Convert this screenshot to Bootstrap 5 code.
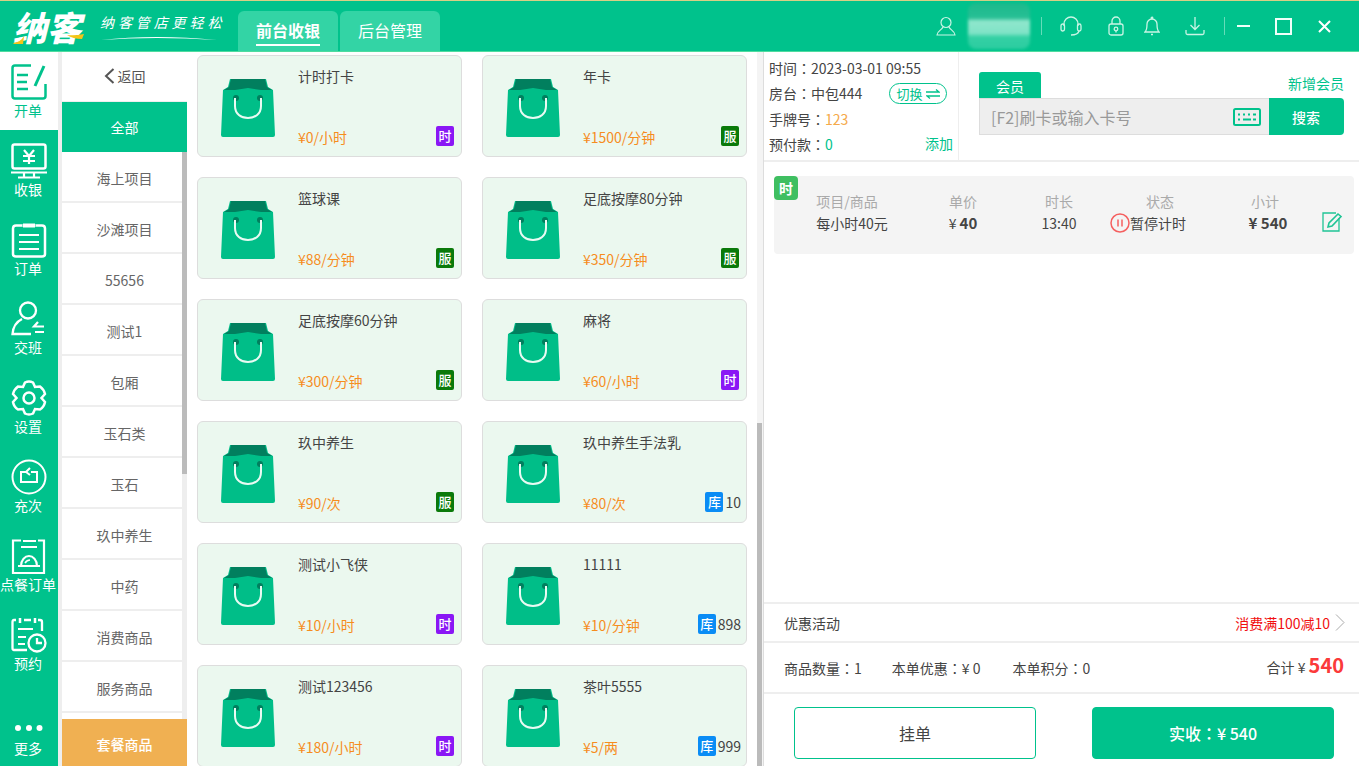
<!DOCTYPE html>
<html lang="zh">
<head>
<meta charset="utf-8">
<title>纳客</title>
<link rel="stylesheet" href="https://cdn.jsdelivr.net/npm/bootstrap@5.3.0/dist/css/bootstrap.min.css">
<style>
:root{--g:#00c28c;}
html,body{height:100%;overflow:hidden;}
body{font-family:"Noto Sans CJK SC","Noto Sans",sans-serif;font-size:14px;color:#444;background:#fff;line-height:20px;}
.shell{width:1359px;height:766px;}
svg{display:block;flex:none;}
.colon{font-family:"Noto Sans CJK TC",sans-serif;}
.topbar{height:52px;background:var(--g);border-top:1px solid #d8cf85;border-bottom:1px solid #4fdc9f;flex:none;}
.brand{width:71px;margin-left:13px;margin-top:1px;color:#fff;font-size:34px;line-height:40px;font-weight:900;font-style:italic;letter-spacing:0;white-space:nowrap;position:relative;}
.brand-swoosh{position:absolute;left:0;bottom:2px;}
.slogan{margin-left:16px;width:126px;color:#fff;}
.slogan-text{font-family:"Liberation Serif","Noto Sans CJK SC",serif;font-style:italic;font-size:14px;line-height:22px;letter-spacing:3.9px;white-space:nowrap;margin-top:2px;}
.tabs-top{margin-left:12px;gap:2px;align-self:flex-end;}
.tab-top{width:100px;height:40px;background:#33d4a5;border-radius:6px 6px 0 0;color:#fff;font-size:16px;text-align:center;line-height:38px;}
.tab-top span{display:inline-block;height:34px;line-height:38px;}
.tab-top.on span{font-weight:700;border-bottom:2px solid #fff;height:35px;line-height:38px;}
.tool{margin-left:auto;height:50px;}
.blurred{width:62px;height:46px;margin:0 11px 0 12px;background:linear-gradient(180deg,#1cb98c 0,#26bf94 32%,#8fe6cc 40%,#7fe3c6 66%,#34d0a4 74%,#2bcca0 100%);filter:blur(1.5px);border-radius:8px;}
.sep{width:1px;height:18px;background:#66dcb9;}
.nav-rail{width:58px;background:var(--g);flex:none;}
.rail-tile{height:79px;padding-top:13px;color:#fff;text-align:center;font-size:14px;}
.rail-tile svg{margin:0 auto;}
.rail-tile b{display:block;font-weight:400;line-height:20px;margin:0 -3px 0 -5px;white-space:nowrap;font-size:14px;}
.rail-tile.on{height:78px;padding-top:12px;background:#fff;color:var(--g);}
.rail-more{margin-top:auto;height:51px;padding-top:10px;}
.rail-more b{margin-top:7px;}
.rail-gap{width:4px;background:#eee;flex:none;}
.cats{width:125px;flex:none;color:#666;text-align:center;}
.cat-back{height:50px;line-height:50px;color:#555;border-bottom:1px solid #eee;gap:3px;padding-bottom:2px;}
.cat-all{height:50px;line-height:50px;background:var(--g);color:#fff;flex:none;}
.cat-body{flex:1 1 0;min-height:0;}
.cat-list{width:120px;}
.cat-row{height:51px;line-height:52px;border-bottom:2px solid #eee;padding-left:5px;white-space:nowrap;}
.cat-track{width:5px;background:#eee;}
.cat-thumb{height:322px;background:#bbb;}
.cat-foot{height:47px;line-height:50px;background:#f0b052;color:#fff;font-weight:500;flex:none;}
.goods{width:570px;flex:none;overflow:hidden;padding:3px 10px 0;}
.goods-grid{display:grid;grid-template-columns:265px 265px;column-gap:20px;row-gap:20px;}
.good{height:102px;background:#ebf8ef;border:1px solid #ddd;border-radius:6px;padding:23px 0 0 23px;gap:0;position:relative;}
.good-info{margin-left:23px;margin-top:-13px;height:88px;}
.good-name{color:#444;font-size:14px;line-height:20px;}
.good-price{color:#f68d1e;font-size:14px;line-height:20px;margin-top:auto;margin-bottom:7px;}
.tagbox{position:absolute;right:7px;bottom:10px;display:flex;align-items:center;gap:2px;font-size:14px;color:#444;}
.tagbox i{display:block;width:18px;height:20px;border-radius:2px;color:#fff;font-style:normal;font-size:13px;line-height:20px;text-align:center;font-weight:500;}
.tagbox.stock{right:5px;}
.t-time{background:#8a17f5;}
.t-serv{background:#0a7a0a;}
.t-stock{background:#0a8cf5;}
.goods-track{width:6px;background:#f4f4f4;flex:none;padding-top:371px;}
.goods-thumb{height:343px;background:#bbb;width:5px;}
.pane-line{width:1px;background:#ddd;flex:none;}
.pane{flex:1 1 0;min-width:0;}
.pane-top{height:110px;border-bottom:2px solid #eee;flex:none;}
.info{width:195px;border-right:1px solid #eee;padding:4px 11px 0 5px;line-height:25.3px;flex:none;}
.info .row-line{height:25.3px;}
.v-orange{color:#f5a94a;}
.v-green{color:var(--g);}
.switch-pill{width:58px;height:21px;border:1px solid var(--g);border-radius:11px;color:var(--g);font-size:13px;line-height:19px;gap:3px;margin-right:0;}
.info-add{margin:-1px -6px 0 0;font-size:14px;}
.member{padding:20px 15px 0 20px;flex:1 1 0;}
.m-tab{width:62px;height:26px;background:var(--g);color:#fff;text-align:center;line-height:28px;border-radius:3px 3px 0 0;}
.m-new{color:var(--g);font-size:14px;margin-top:-4px;}
.m-search{height:37px;}
.m-search .form-control{height:37px;background:#eee;border:1px solid #ddd;border-right:0;border-radius:0;color:#999;font-size:16px;padding:0 44px 0 11px;font-family:inherit;}
.m-search .form-control::placeholder{color:#999;}
.m-key{position:absolute;right:83px;top:10px;z-index:5;}
.m-go{width:76px;background:var(--g);color:#fff;border:0;border-radius:0 4px 4px 0;font-size:14px;font-weight:500;padding:0;}
.list-pane{flex:1 1 0;padding:14px 5px 0 10px;}
.order{height:78px;background:#f4f4f4;border-radius:4px;position:relative;}
.order-tag{position:absolute;left:0;top:0;width:24px;height:24px;background:#3fbf61;color:#fff;border-radius:4px;text-align:center;line-height:24px;font-weight:700;font-size:14px;}
.cell{position:absolute;top:15px;text-align:center;transform:translateX(-50%);white-space:nowrap;}
.cell small{display:block;color:#aaa;font-size:14px;line-height:20px;margin-bottom:2px;}
.cell span{display:flex;justify-content:center;align-items:center;line-height:20px;color:#444;}
.cell strong{font-weight:700;font-size:15px;}
.cell-name span{margin-left:10px;}
.cell-state span{margin-left:-24px;}
.cell-total span{margin-left:6px;}
.promo{height:41px;border-top:2px solid #eee;border-bottom:2px solid #eee;padding:0 14px 0 20px;flex:none;font-size:14px;}
.promo-red{color:#f10f0f;gap:5px;}
.sum{height:51px;border-bottom:2px solid #eee;padding:0 15px 0 20px;flex:none;gap:30px;font-size:14px;}
.sum-gain{margin-left:2px;}
.sum-total{margin-left:auto;margin-top:-3px;}
.sum-total b{color:#fb3a3a;font-size:20px;font-weight:700;}
.acts{height:72px;padding:13px 25px 0 30px;flex:none;}
.btn-hold,.btn-pay{width:242px;height:52px;border-radius:4px;font-size:16px;font-family:inherit;}
.btn-hold{background:#fff;border:1px solid var(--g);color:#444;}
.btn-pay{background:var(--g);border:1px solid var(--g);color:#fff;font-weight:500;}
</style>
</head>
<body>
<svg width="0" height="0" class="position-absolute">
  <symbol id="bag" viewBox="0 0 54 58">
    <path d="M9 0H45L47 8 52 11 54 56Q54 58 52 58H2Q0 58 0 56L2 11 7 8Z" fill="#00be88"/>
    <path d="M10 0H44L46 8 51 11 40 11 27 9 14 11H3L8 8Z" fill="#017f5e"/>
    <circle cx="15" cy="19" r="3" fill="#017f5e"/><circle cx="39" cy="19" r="3" fill="#017f5e"/>
    <path d="M14 19V27C14 35 20 39 27 39S40 35 40 27V19" fill="none" stroke="#e9fbf3" stroke-width="2"/>
  </symbol>
</svg>
<div class="shell d-flex flex-column">
  <header class="topbar d-flex align-items-center">
    <div class="brand">纳客<svg class="brand-swoosh" width="72" height="12" viewBox="0 0 72 12"><path d="M0 10Q8 9 11 3L10 11H1Z" fill="#f5c518"/><path d="M54 2Q62 3 71 1L69 6Q60 6 54 2Z" fill="#f5c518"/></svg></div>
    <div class="slogan">
      <div class="slogan-text">纳客管店更轻松</div>
      <svg width="118" height="6" viewBox="0 0 118 6"><path d="M1 5Q55-1 117 5Q55 1 1 5Z" fill="#fff"/></svg>
    </div>
    <div class="tabs-top d-flex">
      <div class="tab-top on"><span>前台收银</span></div>
      <div class="tab-top"><span>后台管理</span></div>
    </div>
    <div class="tool d-flex align-items-center">
      <svg width="20" height="20" viewBox="0 0 20 20" fill="none" stroke="#c9f5e5" stroke-width="1.2"><circle cx="10" cy="6.5" r="5"/><path d="M7 11C6 14 1 15 1 19H19C19 15 14 14 13 11"/></svg>
      <div class="blurred"></div>
      <div class="sep"></div>
      <svg style="margin-left:18px" width="22" height="20" viewBox="0 0 22 20" fill="none" stroke="#c9f5e5" stroke-width="1.3"><path d="M4 10V8A7 7 0 0 1 18 8V10"/><rect x="1" y="8" width="3.5" height="7" rx="1.7"/><rect x="17.5" y="8" width="3.5" height="7" rx="1.7"/><path d="M19 15Q18 19 11 19"/></svg>
      <svg style="margin-left:26px" width="16" height="20" viewBox="0 0 16 20" fill="none" stroke="#c9f5e5" stroke-width="1.3"><rect x="1" y="8" width="14" height="11" rx="2"/><path d="M4 8V5A4 4 0 0 1 12 5V8"/><circle cx="8" cy="13" r="1.8"/><path d="M8 15V16.5"/></svg>
      <svg style="margin-left:20px" width="16" height="20" viewBox="0 0 16 20" fill="none" stroke="#c9f5e5" stroke-width="1.3"><path d="M1 16C3 14 3 12 3 8A5 5 0 0 1 13 8C13 12 13 14 15 16Z"/><path d="M7 18.5H9"/><circle cx="8" cy="2" r=".8"/></svg>
      <svg style="margin-left:25px" width="20" height="20" viewBox="0 0 20 20" fill="none" stroke="#c9f5e5" stroke-width="1.3"><path d="M10 1V13M5.5 9L10 13.5 14.500 9"/><path d="M1 14V17Q1 18.500 2.500 18.500H17.500Q19 18.500 19 17V14"/></svg>
      <div class="sep" style="margin-left:19px"></div>
      <svg style="margin-left:12px" width="13" height="3" viewBox="0 0 13 3"><rect width="13" height="2" fill="#f0fff9"/></svg>
      <svg style="margin-left:25px" width="17" height="17" viewBox="0 0 17 17" fill="none" stroke="#f0fff9" stroke-width="2"><rect x="1" y="1" width="15" height="15"/></svg>
      <svg style="margin-left:25px;margin-right:27px" width="15" height="15" viewBox="0 0 15 15" fill="none" stroke="#fff" stroke-width="2"><path d="M2 2L13 13M13 2L2 13"/></svg>
    </div>
  </header>

  <div class="d-flex flex-grow-1" style="min-height:0">
    <nav class="nav-rail d-flex flex-column">
      <div class="rail-tile on">
        <svg width="36" height="36" viewBox="0 0 36 36" fill="none" stroke="#00c28c" stroke-width="2.500"><path d="M20 1.500H4Q1.500 1.500 1.500 4V32Q1.500 34.500 4 34.500H32Q34.500 34.500 34.500 32V20"/><path d="M6 11H17M6 18H16M6 25H17" stroke-width="2.500"/><path d="M33 2L24 22" stroke-width="3"/></svg>
        <b>开单</b>
      </div>
      <div class="rail-tile">
        <svg width="36" height="36" viewBox="0 0 36 36" fill="none" stroke="#fff" stroke-width="2.500"><rect x="1.500" y="1.500" width="33" height="24" rx="2"/><path d="M13 7L18 13 23 7M12 13H24M12 18H24M18 13V21" stroke-width="2.200"/><path d="M0 29.500H36M7 34.500H29M13 29.500V34.500M23 29.500V34.500" stroke-width="2.200"/></svg>
        <b>收银</b>
      </div>
      <div class="rail-tile">
        <svg width="36" height="36" viewBox="0 0 36 36" fill="none" stroke="#fff" stroke-width="2.500"><path d="M11 3.500H5Q2 3.500 2 6.500V32Q2 34.500 5 34.500H31Q34 34.500 34 32V6.500Q34 3.500 31 3.500H25"/><path d="M12 2H24V5H12Z" fill="#fff" stroke-width="1"/><path d="M8 13H28M8 20H28M8 27H28" stroke-width="2"/></svg>
        <b>订单</b>
      </div>
      <div class="rail-tile">
        <svg width="36" height="36" viewBox="0 0 36 36" fill="none" stroke="#fff" stroke-width="2.300"><circle cx="17" cy="9.500" r="8"/><path d="M11 18C5 21 2 26 1.500 33H20"/><path d="M27 21L23 25.500H33M33 31H24" stroke-width="2.200"/></svg>
        <b>交班</b>
      </div>
      <div class="rail-tile">
        <svg width="36" height="36" viewBox="0 0 36 36" fill="none" stroke="#fff" stroke-width="2.500"><path d="M14 2.500Q18 0.500 22 2.500L24 7 29 6.500Q33 9.500 34 14L30.500 18 34 22Q33 27 29 29.500L24 29 22 33.500Q18 35.500 14 33.500L12 29 7 29.500Q3 27 2 22L5.500 18 2 14Q3 9.500 7 6.500L12 7Z"/><circle cx="18" cy="18" r="5.500"/></svg>
        <b>设置</b>
      </div>
      <div class="rail-tile">
        <svg width="36" height="36" viewBox="0 0 36 36" fill="none" stroke="#fff" stroke-width="2"><circle cx="18" cy="18" r="16.500"/><path d="M15 13H10V23H26V13H20" stroke-width="2"/><path d="M19 9L15 13 19 16" stroke-width="2"/></svg>
        <b>充次</b>
      </div>
      <div class="rail-tile">
        <svg width="36" height="36" viewBox="0 0 36 36" fill="none" stroke="#fff" stroke-width="2.200"><path d="M10 2.500H2V35H33V2.500H27"/><path d="M12 3H25M10 9H26" stroke-width="2"/><path d="M7 28H29M10 28C10 22 14 18 18 18S26 22 26 28" stroke-width="2"/><path d="M14 25Q16 22 19 22" stroke-width="1.500"/></svg>
        <b>点餐订单</b>
      </div>
      <div class="rail-tile">
        <svg width="36" height="36" viewBox="0 0 36 36" fill="none" stroke="#fff" stroke-width="2.300"><path d="M5 3H3Q1.500 3 1.500 5V31Q1.500 33 3 33H16M13 3H20M27 3H29Q31 3 31 5V14"/><path d="M9 1V6M24 1V6" stroke-width="2.500"/><path d="M7 12H22M7 20H15M7 27H14" stroke-width="2.200"/><circle cx="26" cy="26" r="8.500"/><path d="M26 21V26H31"/></svg>
        <b>预约</b>
      </div>
      <div class="rail-tile rail-more">
        <svg width="30" height="6" viewBox="0 0 30 6" fill="#fff"><circle cx="4" cy="3" r="3"/><circle cx="15" cy="3" r="3"/><circle cx="25.500" cy="3" r="3"/></svg>
        <b>更多</b>
      </div>
    </nav>
    <div class="rail-gap"></div>

    <aside class="cats d-flex flex-column">
      <div class="cat-back d-flex justify-content-center align-items-center">
        <svg width="11" height="16" viewBox="0 0 11 16" fill="none" stroke="#555" stroke-width="2"><path d="M9.500 1L2 8 9.500 15"/></svg>返回
      </div>
      <div class="cat-all">全部</div>
      <div class="cat-body d-flex">
        <div class="cat-list">
          <div class="cat-row">海上项目</div>
          <div class="cat-row">沙滩项目</div>
          <div class="cat-row">55656</div>
          <div class="cat-row">测试1</div>
          <div class="cat-row">包厢</div>
          <div class="cat-row">玉石类</div>
          <div class="cat-row">玉石</div>
          <div class="cat-row">玖中养生</div>
          <div class="cat-row">中药</div>
          <div class="cat-row">消费商品</div>
          <div class="cat-row">服务商品</div>
        </div>
        <div class="cat-track"><div class="cat-thumb"></div></div>
      </div>
      <div class="cat-foot">套餐商品</div>
    </aside>

    <main class="goods">
      <div class="goods-grid">
        <div class="good d-flex"><svg width="54" height="58"><use href="#bag"/></svg><div class="good-info d-flex flex-column"><div class="good-name">计时打卡</div><div class="good-price">¥0/小时</div></div><div class="tagbox"><i class="t-time">时</i></div></div>
        <div class="good d-flex"><svg width="54" height="58"><use href="#bag"/></svg><div class="good-info d-flex flex-column"><div class="good-name">年卡</div><div class="good-price">¥1500/分钟</div></div><div class="tagbox"><i class="t-serv">服</i></div></div>
        <div class="good d-flex"><svg width="54" height="58"><use href="#bag"/></svg><div class="good-info d-flex flex-column"><div class="good-name">篮球课</div><div class="good-price">¥88/分钟</div></div><div class="tagbox"><i class="t-serv">服</i></div></div>
        <div class="good d-flex"><svg width="54" height="58"><use href="#bag"/></svg><div class="good-info d-flex flex-column"><div class="good-name">足底按摩80分钟</div><div class="good-price">¥350/分钟</div></div><div class="tagbox"><i class="t-serv">服</i></div></div>
        <div class="good d-flex"><svg width="54" height="58"><use href="#bag"/></svg><div class="good-info d-flex flex-column"><div class="good-name">足底按摩60分钟</div><div class="good-price">¥300/分钟</div></div><div class="tagbox"><i class="t-serv">服</i></div></div>
        <div class="good d-flex"><svg width="54" height="58"><use href="#bag"/></svg><div class="good-info d-flex flex-column"><div class="good-name">麻将</div><div class="good-price">¥60/小时</div></div><div class="tagbox"><i class="t-time">时</i></div></div>
        <div class="good d-flex"><svg width="54" height="58"><use href="#bag"/></svg><div class="good-info d-flex flex-column"><div class="good-name">玖中养生</div><div class="good-price">¥90/次</div></div><div class="tagbox"><i class="t-serv">服</i></div></div>
        <div class="good d-flex"><svg width="54" height="58"><use href="#bag"/></svg><div class="good-info d-flex flex-column"><div class="good-name">玖中养生手法乳</div><div class="good-price">¥80/次</div></div><div class="tagbox stock"><i class="t-stock">库</i>10</div></div>
        <div class="good d-flex"><svg width="54" height="58"><use href="#bag"/></svg><div class="good-info d-flex flex-column"><div class="good-name">测试小飞侠</div><div class="good-price">¥10/小时</div></div><div class="tagbox"><i class="t-time">时</i></div></div>
        <div class="good d-flex"><svg width="54" height="58"><use href="#bag"/></svg><div class="good-info d-flex flex-column"><div class="good-name">11111</div><div class="good-price">¥10/分钟</div></div><div class="tagbox stock"><i class="t-stock">库</i>898</div></div>
        <div class="good d-flex"><svg width="54" height="58"><use href="#bag"/></svg><div class="good-info d-flex flex-column"><div class="good-name">测试123456</div><div class="good-price">¥180/小时</div></div><div class="tagbox"><i class="t-time">时</i></div></div>
        <div class="good d-flex"><svg width="54" height="58"><use href="#bag"/></svg><div class="good-info d-flex flex-column"><div class="good-name">茶叶5555</div><div class="good-price">¥5/两</div></div><div class="tagbox stock"><i class="t-stock">库</i>999</div></div>
      </div>
    </main>
    <div class="goods-track"><div class="goods-thumb"></div></div>
    <div class="pane-line"></div>

    <section class="pane d-flex flex-column">
      <div class="pane-top d-flex">
        <div class="info">
          <div class="row-line">时间<span class="colon" lang="zh-TW">：</span>2023-03-01 09:55</div>
          <div class="row-line d-flex justify-content-between align-items-center"><span>房台<span class="colon" lang="zh-TW">：</span>中包444</span>
            <span class="switch-pill d-flex justify-content-center align-items-center">切换<svg width="14" height="10" viewBox="0 0 14 10" fill="none" stroke="#00c28c" stroke-width="1.300"><path d="M0 3H13L10 .5M14 7H1L4 9.500"/></svg></span></div>
          <div class="row-line">手牌号<span class="colon" lang="zh-TW">：</span><span class="v-orange">123</span></div>
          <div class="row-line d-flex justify-content-between"><span>预付款<span class="colon" lang="zh-TW">：</span><span class="v-green">0</span></span><span class="v-green info-add">添加</span></div>
        </div>
        <div class="member">
          <div class="d-flex justify-content-between align-items-center">
            <div class="m-tab">会员</div><div class="m-new">新增会员</div>
          </div>
          <div class="input-group m-search position-relative">
            <input type="text" class="form-control" placeholder="[F2]刷卡或输入卡号">
            <svg class="m-key" width="28" height="18" viewBox="0 0 28 18" fill="none" stroke="#00c28c"><rect x="1" y="1" width="26" height="16" rx="1.500" stroke-width="2"/><path d="M5 6.500H7M10 6.500H12M15 6.500H17M20 6.500H23M5 11.500H7M10 11.500H18M20 11.500H23" stroke-width="2"/></svg>
            <button class="m-go" type="button">搜索</button>
          </div>
        </div>
      </div>

      <div class="list-pane">
        <div class="order">
          <div class="order-tag">时</div>
          <div class="cell cell-name" style="left:73px"><small>项目/商品</small><span>每小时40元</span></div>
          <div class="cell" style="left:189px"><small>单价</small><span>¥&nbsp;<strong>40</strong></span></div>
          <div class="cell" style="left:285px"><small>时长</small><span>13:40</span></div>
          <div class="cell cell-state" style="left:386px"><small>状态</small><span><svg width="20" height="20" viewBox="0 0 20 20" fill="none" stroke="#f55f5f"><circle cx="10" cy="10" r="9" stroke-width="1.500"/><path d="M8 6.500V13.500M12 6.500V13.500" stroke-width="1.500"/></svg>暂停计时</span></div>
          <div class="cell cell-total" style="left:491px"><small>小计</small><span><strong>¥&nbsp;540</strong></span></div>
          <svg class="position-absolute" style="left:548px;top:36px" width="21" height="20" viewBox="0 0 21 20" fill="none" stroke="#1fc495" stroke-width="1.300"><path d="M17 6V19H1V1H14"/><path d="M6 15L7 11 16 2 19 4.500 10 14Z" stroke-width="1.600"/></svg>
        </div>
      </div>

      <div class="promo d-flex justify-content-between align-items-center">
        <span>优惠活动</span>
        <span class="promo-red d-flex align-items-center">消费满100减10<svg width="10" height="17" viewBox="0 0 10 17" fill="none" stroke="#aaa" stroke-width="1"><path d="M1 .5L9 8.500 1 16.500"/></svg></span>
      </div>
      <div class="sum d-flex align-items-center">
        <span>商品数量<span class="colon" lang="zh-TW">：</span>1</span><span>本单优惠<span class="colon" lang="zh-TW">：</span>¥ 0</span><span class="sum-gain">本单积分<span class="colon" lang="zh-TW">：</span>0</span>
        <span class="sum-total">合计 ¥ <b>540</b></span>
      </div>
      <div class="acts d-flex justify-content-between">
        <button class="btn-hold" type="button">挂单</button>
        <button class="btn-pay" type="button">实收<span class="colon" lang="zh-TW">：</span>¥ 540</button>
      </div>
    </section>
  </div>
</div>
<script src="https://cdn.jsdelivr.net/npm/bootstrap@5.3.0/dist/js/bootstrap.bundle.min.js"></script>
</body>
</html>
